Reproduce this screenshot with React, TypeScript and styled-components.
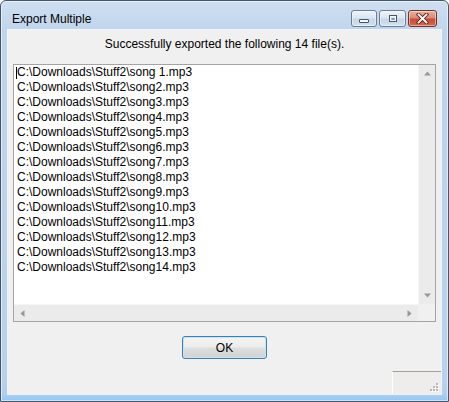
import React from "react";
import styled, { createGlobalStyle } from "styled-components";

const GlobalStyle = createGlobalStyle`
  html, body { margin: 0; padding: 0; background: #ffffff; }
  body { font-family: "Liberation Sans", Arial, sans-serif; font-size: 12px; color: #000; }
  * { box-sizing: border-box; }
`;

const Window = styled.div`
  width: 449px;
  height: 402px;
  display: flex;
  flex-direction: column;
  border: 1px solid #44566b;
  border-radius: 6px 6px 0 0;
  padding: 0 7px 7px;
  background: linear-gradient(
    180deg,
    #cfdff0 0px,
    #c0d5ec 29px,
    #b9d1eb 380px,
    #afcff0 393px,
    #96c8f2 399px
  );
  box-shadow: inset 0 0 0 1px rgba(255, 255, 255, 0.55);
`;

const TitleBar = styled.div`
  height: 29px;
  display: flex;
  align-items: flex-start;
  padding-left: 4px;
`;

const Title = styled.div`
  margin-top: 11px;
  line-height: 15px;
  font-size: 12px;
  color: #000;
`;

const CaptionGroup = styled.div`
  margin-left: auto;
  margin-top: 9px;
  margin-right: 4px;
  display: flex;
  gap: 2px;
`;

const CaptionButton = styled.div<{ $w: number; $close?: boolean }>`
  width: ${(p) => p.$w}px;
  height: 17px;
  border-radius: 3px;
  border: 1px solid ${(p) => (p.$close ? "#7a2f26" : "#6a7d93")};
  display: flex;
  align-items: center;
  justify-content: center;
  background: ${(p) =>
    p.$close
      ? "linear-gradient(180deg, #eab0a2 0%, #dd8a76 45%, #c84c36 55%, #d4694f 100%)"
      : "linear-gradient(180deg, #eef3f9 0%, #dbe6f2 45%, #c6d6e8 55%, #d3e1f0 100%)"};
  box-shadow: inset 0 0 0 1px rgba(255, 255, 255, 0.45);
`;

const Client = styled.div`
  flex: 1;
  background: #f0f0f0;
  display: flex;
  flex-direction: column;
  box-shadow: 0 0 0 1px rgba(255, 255, 255, 0.75);
`;

const Header = styled.div`
  padding-top: 7px;
  line-height: 15px;
  text-align: center;
`;

const ListBox = styled.div`
  margin: 12px 5px 0;
  height: 258px;
  border: 1px solid #a4a4a4;
  background: #fff;
  display: grid;
  grid-template-columns: 1fr 17px;
  grid-template-rows: 1fr 17px;
`;

const ListContent = styled.div`
  padding: 0 0 0 3px;
  overflow: hidden;
`;

const Row = styled.div`
  position: relative;
  line-height: 15px;
  white-space: nowrap;
`;

const Caret = styled.span`
  position: absolute;
  left: -1px;
  top: 2px;
  width: 1px;
  height: 12px;
  background: #000;
`;

const VScroll = styled.div`
  background: #ebebeb;
  border-left: 1px solid #f6f6f6;
  display: flex;
  flex-direction: column;
  justify-content: space-between;
`;

const HScroll = styled.div`
  background: #ebebeb;
  border-top: 1px solid #f6f6f6;
  display: flex;
  justify-content: space-between;
`;

const Corner = styled.div`
  background: #f0f0f0;
`;

const ArrowBox = styled.div`
  width: 17px;
  height: 17px;
  flex: none;
  display: flex;
  align-items: center;
  justify-content: center;
`;

const ButtonRow = styled.div`
  margin-top: 14px;
  display: flex;
  justify-content: center;
`;

const OkButton = styled.button`
  width: 85px;
  height: 23px;
  border: 1px solid #3c7fb1;
  border-radius: 3px;
  font-family: "Liberation Sans", Arial, sans-serif;
  font-size: 12px;
  color: #000;
  padding: 0;
  background: linear-gradient(180deg, #f4f4f4 0%, #ececec 48%, #dedede 52%, #d2d2d2 100%);
  box-shadow: inset 0 0 0 1px #c6e6f7;
`;

const GripRow = styled.div`
  margin-top: 12px;
  display: flex;
  justify-content: flex-end;
`;

const GripBox = styled.div`
  width: 49px;
  height: 23px;
  border-top: 1px solid #a0a0a0;
  border-left: 1px solid #fdfdfd;
  background: #eeedeb;
  display: flex;
  align-items: flex-end;
  justify-content: flex-end;
  padding: 0 2px 2px 0;
`;

const files = [
  "C:\\Downloads\\Stuff2\\song 1.mp3",
  ...Array.from({ length: 13 }, (_, i) => `C:\\Downloads\\Stuff2\\song${i + 2}.mp3`),
];

const Tri = ({ dir }: { dir: "up" | "down" | "left" | "right" }) => {
  const pts: Record<string, string> = {
    up: "0,4.5 3.5,0.5 7,4.5",
    down: "0,0.5 3.5,4.5 7,0.5",
    left: "4.5,0 0.5,3.5 4.5,7",
    right: "0.5,0 4.5,3.5 0.5,7",
  };
  const vertical = dir === "up" || dir === "down";
  return (
    <svg width={vertical ? 7 : 5} height={vertical ? 5 : 7} viewBox={vertical ? "0 0 7 5" : "0 0 5 7"}>
      <polygon points={pts[dir]} fill="#989898" />
    </svg>
  );
};

const MinIcon = () => (
  <svg width="12" height="10" viewBox="0 0 12 10">
    <rect x="1.5" y="5.5" width="9" height="3" rx="0.5" fill="#f4f7fb" stroke="#44546a" />
  </svg>
);

const MaxIcon = () => (
  <svg width="12" height="10" viewBox="0 0 12 10">
    <rect x="2.5" y="1.5" width="7" height="6" fill="none" stroke="#44546a" />
    <rect x="3.5" y="2.5" width="5" height="4" fill="none" stroke="#f4f7fb" />
    <rect x="4.5" y="4.5" width="3" height="1" fill="#44546a" />
  </svg>
);

const CloseIcon = () => (
  <svg width="13" height="11" viewBox="0 0 13 11">
    <path d="M2.5 1.5 L10.5 9.5 M10.5 1.5 L2.5 9.5" stroke="#5a2018" strokeWidth="3.6" strokeLinecap="square" />
    <path d="M2.5 1.5 L10.5 9.5 M10.5 1.5 L2.5 9.5" stroke="#ffffff" strokeWidth="1.8" strokeLinecap="square" />
  </svg>
);

const Gripper = () => (
  <svg width="10" height="10" viewBox="0 0 10 10">
    {[
      [7, 1],
      [4, 4],
      [7, 4],
      [1, 7],
      [4, 7],
      [7, 7],
    ].map(([x, y], i) => (
      <g key={i}>
        <rect x={x + 1} y={y + 1} width="2" height="2" fill="#ffffff" />
        <rect x={x} y={y} width="2" height="2" fill="#b8b8b8" />
      </g>
    ))}
  </svg>
);

export default function App() {
  return (
    <>
      <GlobalStyle />
      <Window>
        <TitleBar>
          <Title>Export Multiple</Title>
          <CaptionGroup>
            <CaptionButton $w={26}>
              <MinIcon />
            </CaptionButton>
            <CaptionButton $w={27}>
              <MaxIcon />
            </CaptionButton>
            <CaptionButton $w={29} $close>
              <CloseIcon />
            </CaptionButton>
          </CaptionGroup>
        </TitleBar>
        <Client>
          <Header>Successfully exported the following 14 file(s).</Header>
          <ListBox>
            <ListContent>
              {files.map((f, i) => (
                <Row key={f}>
                  {i === 0 && <Caret />}
                  {f}
                </Row>
              ))}
            </ListContent>
            <VScroll>
              <ArrowBox>
                <Tri dir="up" />
              </ArrowBox>
              <ArrowBox>
                <Tri dir="down" />
              </ArrowBox>
            </VScroll>
            <HScroll>
              <ArrowBox>
                <Tri dir="left" />
              </ArrowBox>
              <ArrowBox>
                <Tri dir="right" />
              </ArrowBox>
            </HScroll>
            <Corner />
          </ListBox>
          <ButtonRow>
            <OkButton>OK</OkButton>
          </ButtonRow>
          <GripRow>
            <GripBox>
              <Gripper />
            </GripBox>
          </GripRow>
        </Client>
      </Window>
    </>
  );
}
